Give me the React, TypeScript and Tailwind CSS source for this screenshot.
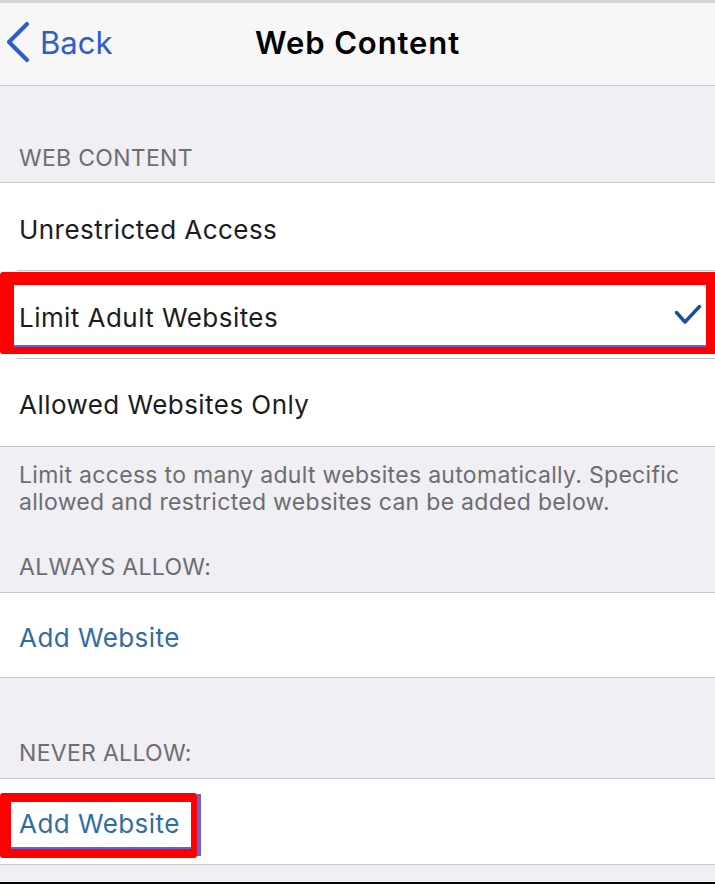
import React from "react";

const font = { fontFamily: "Inter, 'Liberation Sans', sans-serif" };

function Row({ children, last, h = "h-[88px]" }: { children: React.ReactNode; last?: boolean; h?: string }) {
  return (
    <div className={`relative flex ${h} items-center bg-white pl-[19px] pt-[4px]`}>
      {children}
      {!last && <div className="absolute bottom-0 left-[17px] right-0 h-px bg-[#c8c7cc]" />}
    </div>
  );
}

export default function App() {
  return (
    <div className="w-[715px] h-[884px] overflow-hidden bg-[#efeff4]" style={font}>
      {/* nav */}
      <div className="h-[3px] bg-[#d6d6da]" />
      <div className="relative flex h-[83px] items-center justify-center border-b border-[#c8c7cc] bg-[#f7f7f7] pb-[4px]">
        <div className="absolute left-[5px] top-0 flex h-full items-center gap-[10px] pb-[4px] text-[#2f5dcc]">
          <svg width="25" height="42" viewBox="0 0 25 42" fill="none">
            <path d="M22 3 L4 21 L22 39" stroke="currentColor" strokeWidth="4.2" strokeLinecap="round" strokeLinejoin="round" />
          </svg>
          <span className="text-[31px] leading-none">Back</span>
        </div>
        <h1 className="text-[31px] font-semibold leading-none tracking-[0.9px] text-black">Web Content</h1>
      </div>

      {/* web content section */}
      <div className="flex h-[96px] items-end pb-[11px] pl-[19px] text-[23px] leading-[26px] tracking-[0.3px] text-[#6d6d72]">
        WEB CONTENT
      </div>
      <div className="border-y border-[#c8c7cc] text-[26px] tracking-[0.45px] text-[#1c1c1e]">
        <Row>Unrestricted Access</Row>
        <Row>
          <span>Limit Adult Websites</span>
          <svg className="absolute left-[674px] top-[33px]" width="28" height="22" viewBox="0 0 28 22" fill="none">
            <path d="M2.5 8.5 L11 18 L25.5 2.5" stroke="#1f4c9c" strokeWidth="3.4" strokeLinecap="round" strokeLinejoin="round" />
          </svg>
          <div className="absolute left-0 right-0 top-[1px] h-[82px] rounded-l-[3px] border-b-[7px] border-l-[14px] border-r-[9px] border-t-[13px] border-[#ff0000]">
            <div className="absolute bottom-0 left-0 right-0 h-[2px] bg-[#6a5fd8]" />
          </div>
        </Row>
        <Row last h="h-[87px]">Allowed Websites Only</Row>
      </div>

      {/* description */}
      <div className="px-[19px] pt-[15px] text-[23px] leading-[27px] tracking-[0.3px] text-[#6d6d72]">
        <p>Limit access to many adult websites automatically. Specific allowed and restricted websites can be added below.</p>
        <p className="mt-[38px] pb-[12px] leading-[26px]">ALWAYS ALLOW:</p>
      </div>
      <div className="border-y border-[#c8c7cc] text-[26px] tracking-[0.45px] text-[#2f6ea3]">
        <Row last h="h-[84px]">Add Website</Row>
      </div>

      <div className="flex h-[100px] items-end pb-[12px] pl-[19px] text-[23px] leading-[26px] tracking-[0.3px] text-[#6d6d72]">
        NEVER ALLOW:
      </div>
      <div className="border-y border-[#c8c7cc] text-[26px] tracking-[0.45px] text-[#2f6ea3]">
        <Row last h="h-[85px]">
          <span>Add Website</span>
          <div className="absolute left-0 top-[14px] h-[65px] w-[197px] rounded-[3px] border-b-[9px] border-l-[11px] border-r-[6px] border-t-[9px] border-[#ff0000]">
            <div className="absolute bottom-0 left-0 right-0 h-[2px] bg-[#6a5fd8]" />
          </div>
          <div className="absolute left-[197px] top-[15px] h-[62px] w-[4px] bg-[#6a5fd8]" />
        </Row>
      </div>
      <div className="h-[17px]" />
      <div className="h-[3px] bg-black" />
    </div>
  );
}
